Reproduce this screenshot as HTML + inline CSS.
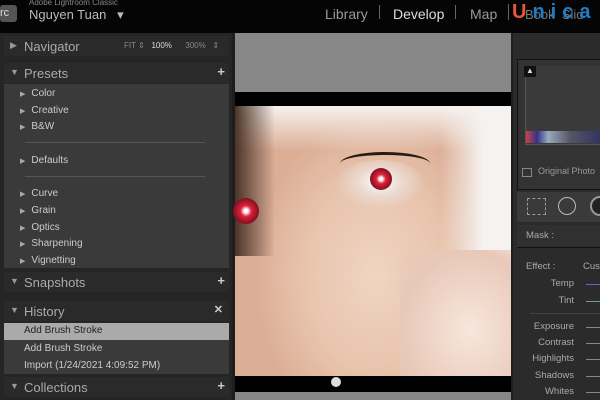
<!DOCTYPE html><html><head><style>
body{margin:0;width:600px;height:400px;background:#1e1e1e;font-family:"Liberation Sans",sans-serif;overflow:hidden;position:relative}
.a{position:absolute}
.hd{position:absolute;left:4px;width:225px;height:20px;background:#2a2a2a;color:#aaa;font-size:13px}
.hd span{position:absolute;left:20px;top:3px}
.hd i{position:absolute;left:6px;top:4px;font-style:normal;font-size:9px;color:#999}
.it{position:absolute;left:20px;font-size:10px;color:#ccc}
.it:before{content:"▶";font-size:7px;margin-right:6px;color:#aaa}
.sl{position:absolute;right:0;width:14px;height:1px;background:#888}
.lb{position:absolute;right:26px;font-size:9.5px;color:#aaa;text-align:right}
</style></head><body>
<div class="a" style="left:0;top:0;width:600px;height:33px;background:#050505"></div>
<div class="a" style="left:0;top:5px;width:17px;height:17px;background:#555;border-radius:3px;color:#ddd;font-size:11px;line-height:17px">rc</div>
<div class="a" style="left:29px;top:-2px;font-size:8px;color:#888">Adobe Lightroom Classic</div>
<div class="a" style="left:29px;top:7px;font-size:13px;color:#bbb">Nguyen Tuan &nbsp;&nbsp;▾</div>
<div class="a" style="left:325px;top:6px;font-size:14px;color:#999">Library</div>
<div class="a" style="left:379px;top:5px;width:1px;height:14px;background:#666"></div>
<div class="a" style="left:393px;top:6px;font-size:14px;color:#ddd">Develop</div>
<div class="a" style="left:455px;top:5px;width:1px;height:14px;background:#666"></div>
<div class="a" style="left:470px;top:6px;font-size:14px;color:#999">Map</div>
<div class="a" style="left:508px;top:4px;width:1px;height:16px;background:#666"></div>
<div class="a" style="left:525px;top:7px;font-size:13px;color:#777">Book &nbsp;Slid</div>
<div class="a" style="left:512px;top:1px;font-size:20px;font-weight:bold;letter-spacing:6px"><span style="color:#e8553a">U</span><span style="color:#1f7cc8">nica</span></div>
<!-- left panel -->
<div class="a" style="left:0;top:33px;width:232px;height:367px;background:#252525"></div>
<div class="hd" style="top:36px"><i>▶</i><span>Navigator</span><b style="position:absolute;left:120px;top:5px;font-size:8px;color:#888;font-weight:normal">FIT ⇕ &nbsp;&nbsp;<span style="color:#ddd;position:static">100%</span> &nbsp;&nbsp;&nbsp;&nbsp;&nbsp;300% &nbsp;&nbsp;⇕</b></div>
<div class="hd" style="top:63px"><i>▼</i><span>Presets</span><b style="position:absolute;right:4px;top:1px;color:#ccc">+</b></div>
<div class="a" style="left:4px;top:84px;width:225px;height:184px;background:#3a3a3a"></div>
<div class="it" style="top:88px">Color</div><div class="it" style="top:105px">Creative</div><div class="it" style="top:121px">B&amp;W</div>
<div class="a" style="left:25px;top:142px;width:180px;height:1px;background:#555"></div>
<div class="it" style="top:155px">Defaults</div>
<div class="a" style="left:25px;top:176px;width:180px;height:1px;background:#555"></div>
<div class="it" style="top:188px">Curve</div><div class="it" style="top:205px">Grain</div><div class="it" style="top:222px">Optics</div><div class="it" style="top:238px">Sharpening</div><div class="it" style="top:255px">Vignetting</div>
<div class="hd" style="top:272px"><i>▼</i><span>Snapshots</span><b style="position:absolute;right:4px;top:1px;color:#ccc">+</b></div>
<div class="hd" style="top:301px"><i>▼</i><span>History</span><b style="position:absolute;right:6px;top:2px;color:#ccc;font-size:11px">✕</b></div>
<div class="a" style="left:4px;top:323px;width:225px;height:17px;background:#aaa"></div>
<div class="a" style="left:24px;top:325px;font-size:10px;color:#222">Add Brush Stroke</div>
<div class="a" style="left:4px;top:340px;width:225px;height:34px;background:#3a3a3a"></div>
<div class="a" style="left:24px;top:343px;font-size:10px;color:#ccc">Add Brush Stroke</div>
<div class="a" style="left:24px;top:360px;font-size:10px;color:#ccc">Import (1/24/2021 4:09:52 PM)</div>
<div class="hd" style="top:377px"><i>▼</i><span>Collections</span><b style="position:absolute;right:4px;top:1px;color:#ccc">+</b></div>
<!-- center -->
<div class="a" style="left:235px;top:33px;width:276px;height:59px;background:#878787"></div>
<div class="a" style="left:235px;top:92px;width:276px;height:300px;background:#000"></div>
<div class="a" style="left:235px;top:106px;width:276px;height:270px;background:radial-gradient(ellipse 120px 160px at 140px 170px,#f0d4c2 0%,#e8c4ad 60%,#dcae96 100%)"></div>
<div class="a" style="left:235px;top:106px;width:276px;height:45px;background:linear-gradient(#f6f2ee,rgba(240,220,205,0))"></div>
<div class="a" style="left:440px;top:106px;width:71px;height:270px;background:linear-gradient(90deg,rgba(245,242,240,0),#f5f2f0 60%)"></div>
<div class="a" style="left:235px;top:106px;width:40px;height:150px;background:linear-gradient(90deg,#4a3328,rgba(180,140,120,0))"></div>
<div class="a" style="left:335px;top:160px;width:90px;height:50px;border-radius:50%;background:radial-gradient(ellipse at 45px 22px,#fff 0,#ead9cf 35%,rgba(0,0,0,0) 70%)"></div>
<div class="a" style="left:370px;top:168px;width:22px;height:22px;border-radius:50%;background:radial-gradient(#fff 10%,#e0203a 30%,#801020 70%)"></div>
<div class="a" style="left:233px;top:198px;width:26px;height:26px;border-radius:50%;background:radial-gradient(#fff 10%,#e0203a 30%,#801020 70%)"></div>
<div class="a" style="left:340px;top:152px;width:90px;height:20px;border-top:3px solid #2a1a14;border-radius:50%"></div>
<div class="a" style="left:400px;top:250px;width:111px;height:126px;background:radial-gradient(ellipse at 70px 80px,#f8e6dc,#e8c8b8 70%,rgba(232,200,184,0))"></div>
<div class="a" style="left:331px;top:377px;width:10px;height:10px;border-radius:50%;background:#ddd"></div>
<div class="a" style="left:235px;top:392px;width:276px;height:8px;background:#878787"></div>
<!-- right -->
<div class="a" style="left:513px;top:33px;width:87px;height:367px;background:#2b2b2b"></div>
<div class="a" style="left:517px;top:59px;width:83px;height:129px;background:#333;border:1px solid #111"></div>
<div class="a" style="left:525px;top:66px;width:75px;height:78px;background:#3a3a3a;border-left:1px solid #555;border-bottom:1px solid #555"></div>
<div class="a" style="left:524px;top:66px;width:12px;height:11px;background:#111;color:#ddd;font-size:8px;text-align:center">▲</div>
<div class="a" style="left:526px;top:131px;width:74px;height:12px;background:linear-gradient(90deg,#c44 0,#338 15%,#9ab 30%,#556 60%,#336)"></div>
<div class="a" style="left:522px;top:168px;width:8px;height:7px;border:1px solid #888"></div>
<div class="a" style="left:538px;top:166px;font-size:9px;color:#999">Original Photo</div>
<div class="a" style="left:517px;top:192px;width:83px;height:30px;background:#3a3a3a"></div>
<div class="a" style="left:527px;top:198px;width:17px;height:15px;border:1px dashed #999"></div>
<div class="a" style="left:558px;top:197px;width:16px;height:16px;border:1px solid #bbb;border-radius:50%"></div>
<div class="a" style="left:590px;top:196px;width:16px;height:16px;border:2px solid #999;border-radius:50%;background:#222"></div>
<div class="a" style="left:517px;top:225px;width:83px;height:22px;background:#303030;border-bottom:1px solid #111"></div>
<div class="a" style="left:526px;top:230px;font-size:9.5px;color:#aaa">Mask :</div>
<div class="a" style="left:526px;top:261px;font-size:9.5px;color:#aaa">Effect :</div>
<div class="a" style="left:583px;top:261px;font-size:9.5px;color:#aaa">Cus</div>
<div class="lb" style="top:278px">Temp</div><div class="sl" style="top:284px;background:#66c"></div>
<div class="lb" style="top:295px">Tint</div><div class="sl" style="top:301px;background:#6a6"></div>
<div class="a" style="left:530px;top:313px;width:70px;height:1px;background:#444"></div>
<div class="lb" style="top:321px">Exposure</div><div class="sl" style="top:327px"></div>
<div class="lb" style="top:337px">Contrast</div><div class="sl" style="top:343px"></div>
<div class="lb" style="top:353px">Highlights</div><div class="sl" style="top:359px"></div>
<div class="lb" style="top:370px">Shadows</div><div class="sl" style="top:376px"></div>
<div class="lb" style="top:386px">Whites</div><div class="sl" style="top:392px"></div>
</body></html>
